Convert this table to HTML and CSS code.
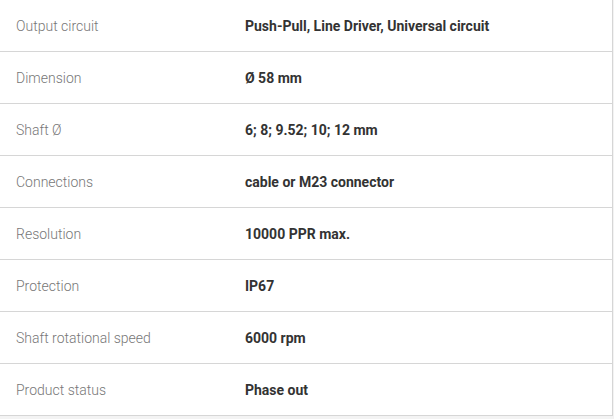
FILE: index.html
```html
<!DOCTYPE html>
<html>
<head>
<meta charset="utf-8">
<link rel="stylesheet" href="styles.css">
</head>
<body>
<div class="specs">
  <div class="row"><div class="label">Output circuit</div><div class="value">Push-Pull, Line Driver, Universal circuit</div></div>
  <div class="row"><div class="label">Dimension</div><div class="value">Ø 58 mm</div></div>
  <div class="row"><div class="label">Shaft Ø</div><div class="value">6; 8; 9.52; 10; 12 mm</div></div>
  <div class="row"><div class="label">Connections</div><div class="value">cable or M23 connector</div></div>
  <div class="row"><div class="label">Resolution</div><div class="value">10000 PPR max.</div></div>
  <div class="row"><div class="label">Protection</div><div class="value">IP67</div></div>
  <div class="row"><div class="label">Shaft rotational speed</div><div class="value">6000 rpm</div></div>
  <div class="row"><div class="label">Product status</div><div class="value">Phase out</div></div>
</div>
</body>
</html>
```
FILE: styles.css
```css
html, body {
  margin: 0;
  padding: 0;
  background: #f3f3f3;
}
.specs {
  width: 612px;
  background: #fff;
  border-right: 1px solid #d6d6d6;
  font-family: Roboto, "Liberation Sans", sans-serif;
  font-size: 14px;
}
.row {
  display: grid;
  grid-template-columns: 245px 1fr;
  align-items: center;
  height: 51px;
  border-bottom: 1px solid #d6d6d6;
}
.label {
  padding-left: 16px;
  color: #777;
  font-weight: 300;
}
.value {
  color: #333;
  font-weight: 700;
}
```
